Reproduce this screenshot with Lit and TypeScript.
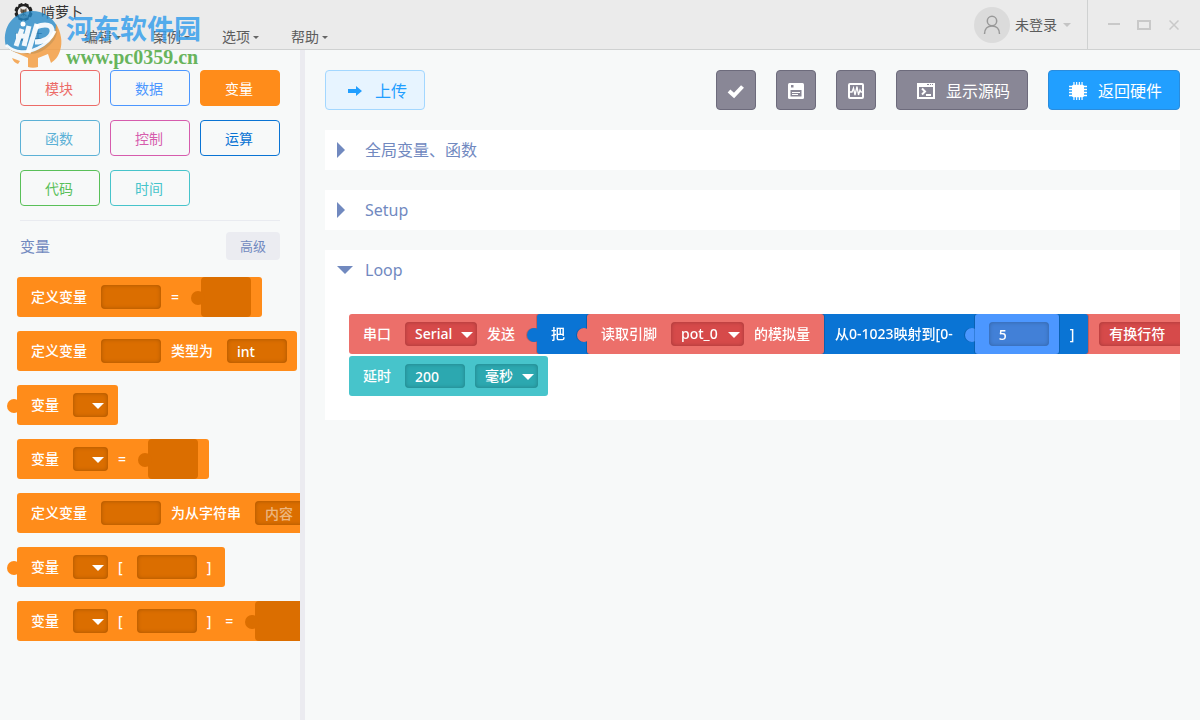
import { LitElement, html, svg, css, nothing, TemplateResult } from "lit";
import { customElement, state } from "lit/decorators.js";
import { classMap } from "lit/directives/class-map.js";
import { styleMap } from "lit/directives/style-map.js";

type Tone = "orange" | "red" | "navy" | "blue" | "teal";
type Part =
  | { kind: "text"; value: string }
  | { kind: "input"; value?: string; hint?: string; name: string }
  | { kind: "select"; value?: string; width: number; name: string }
  | { kind: "slot"; block?: Block };
interface Block {
  tone: Tone;
  tab?: boolean;
  parts: Part[];
}

const text = (value: string): Part => ({ kind: "text", value });
const input = (name: string, value = "", hint = ""): Part => ({ kind: "input", name, value, hint });
const select = (name: string, width: number, value = ""): Part => ({ kind: "select", name, width, value });
const slot = (block?: Block): Part => ({ kind: "slot", block });

const categories = [
  { name: "模块", tone: "c-red" },
  { name: "数据", tone: "c-blue" },
  { name: "变量", tone: "c-orange" },
  { name: "函数", tone: "c-sky" },
  { name: "控制", tone: "c-pink" },
  { name: "运算", tone: "c-navy" },
  { name: "代码", tone: "c-green" },
  { name: "时间", tone: "c-teal" },
];

const palette: Block[] = [
  { tone: "orange", parts: [text("定义变量"), input("变量名"), text("="), slot()] },
  { tone: "orange", parts: [text("定义变量"), input("变量名"), text("类型为"), input("类型", "int")] },
  { tone: "orange", tab: true, parts: [text("变量"), select("变量", 35)] },
  { tone: "orange", parts: [text("变量"), select("变量", 35), text("="), slot()] },
  { tone: "orange", parts: [text("定义变量"), input("变量名"), text("为从字符串"), input("字符串", "", "内容")] },
  { tone: "orange", tab: true, parts: [text("变量"), select("变量", 35), text("["), input("下标"), text("]")] },
  { tone: "orange", parts: [text("变量"), select("变量", 35), text("["), input("下标"), text("]"), text("="), slot()] },
];

const readPin: Block = {
  tone: "red",
  tab: true,
  parts: [text("读取引脚"), select("引脚", 73, "pot_0"), text("的模拟量")],
};
const five: Block = { tone: "blue", tab: true, parts: [input("数值", "5")] };
const mapBlock: Block = {
  tone: "navy",
  tab: true,
  parts: [text("把"), slot(readPin), text("从0-1023映射到[0-"), slot(five), text("]")],
};
const loopBlocks: Block[] = [
  {
    tone: "red",
    parts: [text("串口"), select("串口", 72, "Serial"), text("发送"), slot(mapBlock), select("换行", 100, "有换行符")],
  },
  { tone: "teal", parts: [text("延时"), input("时长", "200"), select("单位", 63, "毫秒")] },
];

const caret = html`<svg class="caret" viewBox="0 0 8 4" aria-hidden="true"><path d="M0 0h8L4 4z" /></svg>`;

@customElement("app-root")
export class AppRoot extends LitElement {
  @state() private category = "变量";
  @state() private open: Record<string, boolean> = { Loop: true };

  static styles = css`
    :host {
      display: flex;
      flex-direction: column;
      min-height: 100vh;
      overflow: hidden;
      position: relative;
      background: #f7f9f9;
      color: #5c5c5c;
      font: 14px/20px "Noto Sans", "Noto Sans CJK SC", sans-serif;
    }
    * { box-sizing: border-box; }
    button, input, select { font: inherit; color: inherit; margin: 0; }
    button { padding: 0; border: 0; background: none; cursor: pointer; white-space: nowrap; }
    svg { display: block; flex: none; }

    .top {
      display: flex;
      justify-content: space-between;
      height: 50px;
      background: #ebebeb;
      border-bottom: 1px solid #cfd1d1;
    }
    .brand { display: flex; align-items: center; gap: 8px; height: 24px; padding-left: 14px; color: #333; }
    .menus { display: flex; gap: 30px; height: 26px; align-items: center; padding-left: 15px; }
    .menus button { display: flex; align-items: center; gap: 3px; width: 39px; }
    .menus .caret { width: 6px; height: 3px; fill: #666; }
    .caret { width: 8px; height: 4px; fill: #c4c4c4; }
    .session { display: flex; align-items: stretch; }
    .user { display: flex; align-items: center; gap: 6px; padding: 1px 16px 0 0; }
    .avatar { width: 36px; height: 36px; margin-right: -1px; border-radius: 50%; background: #dbdbdb; display: grid; place-items: center; }
    .window { display: flex; align-items: center; gap: 10px; padding: 0 16px; border-left: 1px solid #cfd1d1; }
    .window button { width: 20px; height: 20px; display: grid; place-items: center; }

    .watermark { position: absolute; left: 4px; top: 11px; display: flex; gap: 3px; pointer-events: none; }
    .mark-name { display: block; color: rgba(55, 160, 236, 0.85); font: 700 27px/34px "Noto Sans CJK SC", sans-serif; }
    .mark-url { display: block; color: #68b45c; font: bold 20px/24px "Liberation Serif", serif; }

    .body { flex: 1; display: flex; min-width: 0; }
    .side { flex: none; width: 305px; padding: 20px 0; border-right: 5px solid #ebebf0; overflow: hidden; }
    .cats { display: grid; grid-template-columns: repeat(3, 80px); gap: 14px 10px; margin: 0 20px; padding-bottom: 14px; border-bottom: 1px solid #e9ebf0; }
    .cat { height: 36px; padding: 1px 2px 0 0; border: 1px solid currentColor; border-radius: 4px; }
    .c-red { color: #ec6b67; }
    .c-blue { color: #4c97ff; }
    .c-orange { color: #ff8c1a; }
    .c-sky { color: #5cb1d6; }
    .c-pink { color: #d65cad; }
    .c-navy { color: #0a74d4; }
    .c-green { color: #59c059; }
    .c-teal { color: #47c4cb; }
    .cat.on { background: #ff8c1a; border-color: #ff8c1a; color: #fff; }
    .group { display: flex; align-items: center; justify-content: space-between; padding: 11px 20px 17px; color: #7189bf; }
    .group h2 { margin: 0; font-size: 15px; font-weight: 400; }
    .adv { width: 54px; height: 28px; border-radius: 4px; background: #ebecf1; font-size: 13px; }

    .stack { display: flex; flex-direction: column; align-items: flex-start; }
    .palette { gap: 14px; padding-left: 17px; }
    .block { position: relative; display: flex; align-items: center; flex: none; height: 40px; padding-left: 14px; border-radius: 3px; background: var(--face); color: #fff; white-space: nowrap; font-weight: 500; }
    .orange { --face: #ff8c1a; --well: #db6e00; }
    .red { --face: #ec6f6a; --well: #d64a4a; }
    .navy { --face: #0a74d4; --well: #0860b0; }
    .blue { --face: #4c97ff; --well: #4280d7; }
    .teal { --face: #47c4cb; --well: #2ca8b0; }
    .tab::before { content: ""; position: absolute; left: -10px; top: 14px; width: 14px; height: 14px; border-radius: 50%; background: var(--face); clip-path: inset(0 4px 0 0); }
    .word { margin-right: 14px; }
    .well { position: relative; flex: none; display: flex; height: 24px; margin-right: 10px; border-radius: 4px; background: var(--well); box-shadow: inset 0 0 4px rgba(0, 0, 0, 0.25); }
    .well input, .well select { width: 100%; height: 24px; padding: 0 0 0 10px; border: 0; outline: 0; background: none; appearance: none; }
    .well input { width: 60px; }
    .well input::placeholder { color: rgba(255, 255, 255, 0.5); opacity: 1; }
    .arrow { position: absolute; right: 4px; top: 10px; width: 12px; height: 6px; fill: #fff; pointer-events: none; }
    .hole { flex: none; position: relative; width: 50px; height: 40px; margin: 0 11px 0 8px; border-radius: 4px; background: var(--well); }
    .hole::before { content: ""; position: absolute; left: -10px; top: 14px; width: 14px; height: 14px; border-radius: 50%; background: var(--well); }
    .nest { flex: none; margin: 0 11px 0 8px; filter: drop-shadow(-1px 0 0 rgba(0, 0, 0, 0.16)) drop-shadow(1px 0 0 rgba(0, 0, 0, 0.16)); }

    .main { flex: 1; min-width: 0; display: flex; flex-direction: column; gap: 20px; padding: 20px; }
    .tools { display: flex; gap: 20px; font-size: 16px; }
    .tool { display: flex; align-items: center; justify-content: center; height: 40px; min-width: 40px; padding: 1px 0 0; border: 1px solid #6d6b7c; border-radius: 4px; background: #898796; color: #fff; }
    .wide { padding: 1px 17px 0 20px; gap: 11px; }
    .upload { width: 100px; gap: 12px; padding-left: 4px; margin-right: auto; border-color: #a3d7ff; background: #e7f4ff; color: #219eff; }
    .back { border-color: #2a8cdd; background: #219fff; }
    .panel { background: #fff; overflow: hidden; }
    .panel h3 { margin: 0; font-size: 16px; font-weight: 400; }
    .fold { display: flex; align-items: center; width: 100%; height: 40px; padding-left: 12px; color: #7189bf; }
    .fold-mark { width: 28px; fill: #7189bf; }
    .code { gap: 2px; padding: 24px; }
  `;

  private part(p: Part): TemplateResult {
    switch (p.kind) {
      case "text":
        return html`<span class="word">${p.value}</span>`;
      case "input":
        return html`<label class="well"><input aria-label=${p.name} .value=${p.value ?? ""} placeholder=${p.hint || nothing} /></label>`;
      case "select":
        return html`<label class="well" style=${styleMap({ width: p.width + "px" })}>
          <select aria-label=${p.name}><option>${p.value}</option></select>
          <svg class="arrow" viewBox="0 0 12 6" aria-hidden="true"><path d="M0 0h12L6 6z" /></svg>
        </label>`;
      case "slot":
        return p.block ? html`<div class="nest">${this.block(p.block)}</div>` : html`<span class="hole"></span>`;
    }
  }

  private block(b: Block): TemplateResult {
    return html`<div class=${classMap({ block: true, tab: !!b.tab, [b.tone]: true })}>${b.parts.map((p) => this.part(p))}</div>`;
  }

  private panel(name: string, blocks: Block[] = []) {
    const open = !!this.open[name];
    return html`<section class="panel">
      <h3>
        <button class="fold" aria-expanded=${open} @click=${() => (this.open = { ...this.open, [name]: !open })}>
          <svg class="fold-mark" width="28" height="16" viewBox="0 0 28 16" aria-hidden="true">
            <path d=${open ? "M0 4h16L8 12z" : "M0 0v16l8-8z"} />
          </svg>
          ${name}
        </button>
      </h3>
      ${open && blocks.length ? html`<div class="stack code">${blocks.map((b) => this.block(b))}</div>` : nothing}
    </section>`;
  }

  private logo() {
    const teeth = [0, 45, 90, 135, 180, 225, 270, 315];
    return html`<svg width="19" height="20" viewBox="0 0 20 20" aria-hidden="true">
      ${teeth.map((a) => svg`<rect x="7.6" y="0.5" width="4.8" height="4" rx="1" fill="#222" transform="rotate(${a + 22.5} 10 10)" />`)}
      <circle cx="10" cy="10" r="7.2" fill="#eee" stroke="#222" stroke-width="2.2" />
      <path d="M7 5.5l1.4 1.8h3.2L13 5.5l.3 4-1.3 2.2H8L6.7 9.500z" fill="#6b5a4a" />
      <path d="M5 15.500c1-3.500 3-4 5-4s4 .5 5 4l-5 1.500z" fill="#b7a68f" />
      <path d="M10 8v6M7 14l3-2 3 2" stroke="#443" fill="none" />
    </svg>`;
  }

  private watermark() {
    return html`<div class="watermark">
      <svg width="59" height="58" viewBox="0 0 59 58" aria-hidden="true">
        <path d="M1 30C0 12 12 1 28 0c11 0 20 6 25 15 2 9-4 19-15 25-10 5-24 4-33-2-3-2-4-5-4-8z" fill="#2288c8" fill-opacity=".78" />
        <path d="M2 35c9 8 22 9 33 3 11-5 17-14 17-25 5 8 7 18 4 27-2 6-5 9-9 12l-3-9-10 4v9c-3 1-7 1-10 0v-9l-9-4c-6-2-10-5-13-8z" fill="#f39a3c" fill-opacity=".82" />
        <path d="M8 47l8 3-2 3c-3-1-5-3-6-6z" fill="#f39a3c" fill-opacity=".82" />
        <g fill="none" stroke="#fff" stroke-opacity=".92">
          <path d="M2 34c9 8 21 9 32 3 8-4 14-10 17-17" stroke-width="3" />
          <path d="M18 18l-6 17M25 15l-5 20M12 25h10" stroke-width="5" />
          <path d="M33 13l-9 29" stroke-width="5" />
          <path d="M32 16c10-4 17-2 16 5-1 6-8 10-17 10" stroke-width="5" />
        </g>
        <circle cx="19" cy="13" r="2.500" fill="#fff" />
      </svg>
      <div><span class="mark-name">河东软件园</span><span class="mark-url">www.pc0359.cn</span></div>
    </div>`;
  }

  render() {
    return html`
      <header class="top">
        <div>
          <div class="brand">${this.logo()}<span>啃萝卜</span></div>
          <nav class="menus">
            ${["文件", "编辑", "案例", "选项", "帮助"].map((m) => html`<button>${m}${caret}</button>`)}
          </nav>
        </div>
        <div class="session">
          <button class="user">
            <span class="avatar">
              <svg width="18" height="20" viewBox="0 0 18 20" fill="none" stroke="#999" stroke-width="1.500" aria-hidden="true">
                <circle cx="9" cy="6" r="4.700" /><path d="M1.500 19c0-5 3-8 7.500-8s7.500 3 7.500 8" />
              </svg>
            </span>
            未登录${caret}
          </button>
          <div class="window">
            <button aria-label="最小化"><svg width="12" height="12" stroke="#c9c9c9" stroke-width="2"><path d="M0 5h12" /></svg></button>
            <button aria-label="最大化"><svg width="14" height="12" fill="none" stroke="#c9c9c9" stroke-width="2"><path d="M1 2h12v8H1z" /></svg></button>
            <button aria-label="关闭"><svg width="10" height="10" stroke="#c9c9c9" stroke-width="1.500"><path d="M.5.5l9 9M9.500.5l-9 9" /></svg></button>
          </div>
        </div>
      </header>
      <div class="body">
        <aside class="side">
          <div class="cats">
            ${categories.map(
              (c) => html`<button
                class=${classMap({ cat: true, [c.tone]: true, on: c.name === this.category })}
                @click=${() => (this.category = c.name)}
              >${c.name}</button>`
            )}
          </div>
          <div class="group"><h2>${this.category}</h2><button class="adv">高级</button></div>
          <div class="stack palette">${palette.map((b) => this.block(b))}</div>
        </aside>
        <main class="main">
          <div class="tools">
            <button class="tool upload">
              <svg width="16" height="12" viewBox="0 0 16 12" fill="currentColor" aria-hidden="true"><path d="M1 4h8V1l6 5-6 5V8H1z" /></svg>上传
            </button>
            <button class="tool" aria-label="校验">
              <svg width="18" height="16" viewBox="0 0 18 16" fill="none" stroke="#fff" stroke-width="4"><path d="M2 8l5 4.500L15.500 3.500" /></svg>
            </button>
            <button class="tool" aria-label="库">
              <svg width="16" height="16" viewBox="0 0 16 16">
                <rect width="16" height="16" rx="1.500" fill="#fff" /><path d="M3 2h2.500v2.500H3zM2.500 7h11v6.500h-11z" fill="#898796" />
                <path d="M4 9.500h8M4 11.500h6" stroke="#fff" stroke-width="1.200" />
              </svg>
            </button>
            <button class="tool" aria-label="串口监视">
              <svg width="16" height="16" viewBox="0 0 16 16" fill="none" stroke="#fff">
                <rect x="1" y="1" width="14" height="14" rx="1" stroke-width="2" />
                <path d="M2 9h2l1.500-4L7 12l2-8.500L10.500 12 12 7l1 2h1" stroke-width="1.300" />
              </svg>
            </button>
            <button class="tool wide">
              <svg width="18" height="16" viewBox="0 0 18 16" fill="none" stroke="#fff" aria-hidden="true">
                <path d="M1 1h16v14H1z" stroke-width="2" /><path d="M1 3h16" stroke-width="2" />
                <path d="M10 1.500h2M13 1.500h1M15 1.500h1" stroke="#898796" />
                <path d="M5 5.500L8 8.500 5 11.500M9 12h5" stroke-width="2" />
              </svg>显示源码
            </button>
            <button class="tool wide back">
              <svg width="18" height="18" viewBox="0 0 20 18" preserveAspectRatio="none" fill="#fff" stroke="#fff" stroke-width="1.300" aria-hidden="true">
                <rect x="4" y="3.500" width="12" height="11" rx="1" />
                <path d="M5.500 0v18M8.500 0v18M11.500 0v18M14.500 0v18M0 4.500h20M0 7.500h20M0 10.500h20M0 13.500h20" />
              </svg>返回硬件
            </button>
          </div>
          ${this.panel("全局变量、函数")} ${this.panel("Setup")} ${this.panel("Loop", loopBlocks)}
        </main>
      </div>
      ${this.watermark()}
    `;
  }
}
